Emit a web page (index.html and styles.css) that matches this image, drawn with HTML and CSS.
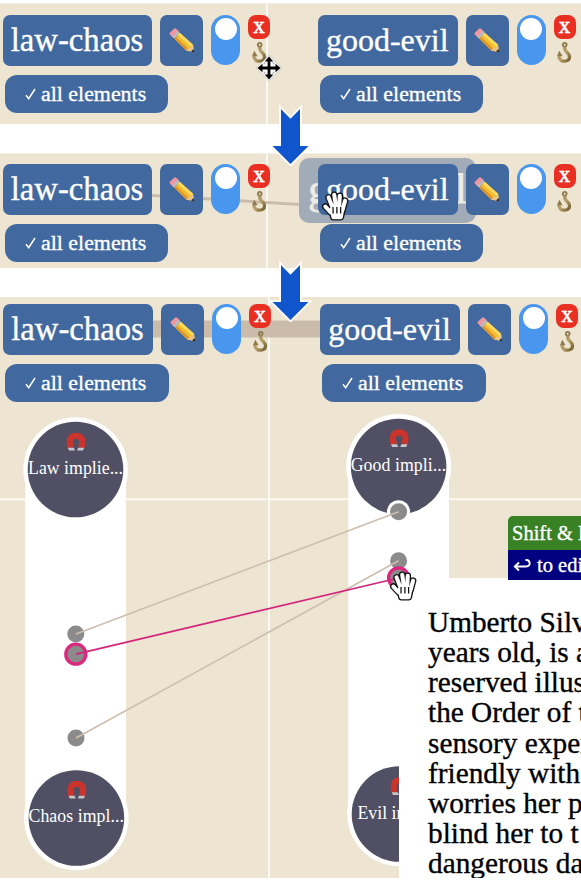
FILE: index.html
```html
<!DOCTYPE html>
<html lang="en">
<head>
<meta charset="utf-8">
<title>Linking axes</title>
<link rel="stylesheet" href="styles.css">
</head>
<body>
<svg class="defs" aria-hidden="true">
  <defs>
    <linearGradient id="brass" x1="0" y1="0" x2="1" y2="1">
      <stop offset="0" stop-color="#8d7a4e"/><stop offset=".5" stop-color="#b8a26b"/><stop offset="1" stop-color="#6f5b2c"/>
    </linearGradient>
    <symbol id="pencil" viewBox="0 0 26 25">
      <path d="M1.5 5.5 6 1.2 8.6 3.3 4 8.5Z" fill="#ef97a0" stroke="#ef97a0" stroke-width="2" stroke-linejoin="round"/>
      <path d="M3.3 8.7 8.7 2.8 10.7 4.7 5.4 10.8Z" fill="#b7bcc4"/>
      <path d="M5.4 10.8 10.7 4.7 24 16.8 25 24 17.2 22.6Z" fill="#f3bd32"/>
      <path d="M8.8 6.9 10.7 4.7 24 16.8 22.4 19Z" fill="#ffda5c"/>
      <path d="M5.4 10.8 7 9 19.2 20.5 17.2 22.6Z" fill="#dd952b"/>
      <path d="M17.2 22.6 19.4 20 22 19.4 24 16.8 25.2 24.2Z" fill="#e8c48d"/>
      <path d="M22 23.6 24.5 21 25.4 24.5Z" fill="#292929"/>
    </symbol>
    <symbol id="hook" viewBox="0 0 15 21">
      <circle cx="7.7" cy="2.8" r="1.9" fill="none" stroke="#8d794b" stroke-width="1.8"/>
      <path d="M7.8 4.5 8 7.5C8.3 10 12.8 11 12.5 15 12.2 18.2 10 19.2 7.2 19.2 3.8 19.2 1.8 17 2 13" fill="none" stroke="url(#brass)" stroke-width="3.3"/>
      <path d="M.2 13.8 2.3 8.8 5.6 14.2Z" fill="#8d794b"/>
    </symbol>
    <symbol id="check" viewBox="0 0 11 12">
      <path d="M1 7.2 3.7 10.7 10 1" fill="none" stroke="#fff" stroke-width="1.5"/>
    </symbol>
    <symbol id="magnet" viewBox="0 0 19 19">
      <path d="M4.6 15.5C1 8 4.2 3.4 9.5 3.4S18 8 14.4 15.5" fill="none" stroke="#c9342d" stroke-width="6.4"/>
      <path d="M1.3 15.2H7.4L8.4 18H2.5ZM11.6 15.2H17.7L16.5 18H10.6Z" fill="#c5c6ca"/>
    </symbol>
    <symbol id="arrow" viewBox="0 0 42 62">
      <path d="M11 5 20.5 14.8 30 5V42H38.5L20.5 60 2.5 42H11Z" fill="#fff" stroke="#fff" stroke-width="3.6"/>
      <path d="M11 5 20.5 14.8 30 5V42H38.5L20.5 60 2.5 42H11Z" fill="#1155cc"/>
    </symbol>
    <symbol id="hand" viewBox="0 0 27 30">
      <g fill="none" stroke="#111" stroke-width="6.2" stroke-linecap="round" stroke-linejoin="round">
        <path d="M4 15.5 9 21M7 7 11 17M12.3 4.5 14 16M17.5 5.5 17 16M22.5 10 20 19"/>
        <path d="M10 19 20 18 18.5 25.5H11.5Z"/>
      </g>
      <g fill="#fff" stroke="#fff" stroke-width="3.8" stroke-linecap="round" stroke-linejoin="round">
        <path d="M4 15.5 9 21M7 7 11 17M12.3 4.5 14 16M17.5 5.5 17 16M22.5 10 20 19"/>
        <path d="M10 18 20 17 18.5 25.5H11.5Z"/>
      </g>
      <path d="M11.2 16V22M14.8 16V22M18.3 16V22" stroke="#111" stroke-width="1.2"/>
    </symbol>
  </defs>
</svg>

<main class="page">
  <section class="band first">
    <div class="axes">
      <div class="axis">
        <div class="row">
          <div class="title law">law-chaos</div>
          <div class="edit"><svg><use href="#pencil"/></svg></div>
          <div class="toggle"></div>
          <div class="tools"><div class="close">x</div><svg><use href="#hook"/></svg></div>
        </div>
        <div class="filter"><svg><use href="#check"/></svg><span>all elements</span></div>
      </div>
      <div class="axis">
        <div class="row">
          <div class="title good">good-evil</div>
          <div class="edit"><svg><use href="#pencil"/></svg></div>
          <div class="toggle"></div>
          <div class="tools"><div class="close">x</div><svg><use href="#hook"/></svg></div>
        </div>
        <div class="filter"><svg><use href="#check"/></svg><span>all elements</span></div>
      </div>
    </div>
  </section>

  <section class="band second">
    <svg class="link" viewBox="0 0 581 115"><path d="M152 41.5 326 52" stroke="#cbbbab" stroke-width="3"/></svg>
    <div class="ghost">good-evil</div>
    <div class="axes">
      <div class="axis">
        <div class="row">
          <div class="title law">law-chaos</div>
          <div class="edit"><svg><use href="#pencil"/></svg></div>
          <div class="toggle"></div>
          <div class="tools"><div class="close">x</div><svg><use href="#hook"/></svg></div>
        </div>
        <div class="filter"><svg><use href="#check"/></svg><span>all elements</span></div>
      </div>
      <div class="axis">
        <div class="row">
          <div class="title good">good-evil</div>
          <div class="edit"><svg><use href="#pencil"/></svg></div>
          <div class="toggle"></div>
          <div class="tools"><div class="close">x</div><svg><use href="#hook"/></svg></div>
        </div>
        <div class="filter"><svg><use href="#check"/></svg><span>all elements</span></div>
      </div>
    </div>
  </section>

  <section class="band third">
    <!-- Coordinates start at the band's top-left corner -->
    <svg class="diagram" viewBox="0 0 581 581">
      <path d="M0 202.3H581" stroke="#faf8f2" stroke-width="2"/>
      <path d="M150 32H325" stroke="#cbbbab" stroke-width="17"/>
      <g fill="#fff">
        <rect x="25.3" y="172" width="100.7" height="350"/>
        <rect x="348.3" y="169" width="100.7" height="350"/>
        <circle cx="75.6" cy="172.5" r="52.3"/><circle cx="76.3" cy="521" r="52.3"/>
        <circle cx="398.7" cy="169.5" r="52.5"/><circle cx="399.5" cy="517" r="52.3"/>
      </g>
      <g fill="#504f64">
        <circle cx="75.5" cy="172.5" r="47.8"/><circle cx="76.4" cy="521" r="47.8"/>
        <circle cx="398.6" cy="169.5" r="47.8"/><circle cx="399.5" cy="517" r="47.8"/>
      </g>
      <use href="#magnet" x="66.5" y="135.5" width="19" height="19"/>
      <use href="#magnet" x="67.3" y="483.5" width="19" height="19"/>
      <use href="#magnet" x="389.7" y="132" width="19" height="19"/>
      <use href="#magnet" x="390.5" y="480" width="19" height="19"/>
      <g class="node-label">
        <text x="28" y="176.5" textLength="95">Law implie...</text>
        <text x="28.5" y="525" textLength="95.5">Chaos impl...</text>
        <text x="350.7" y="173.5" textLength="95.5">Good impli...</text>
        <text x="357.5" y="521.5">Evil impli...</text>
      </g>
      <circle cx="398.5" cy="214.8" r="11.6" fill="#fff"/>
      <g fill="#8b8b8b">
        <circle cx="75.8" cy="337" r="8.5"/><circle cx="76" cy="441" r="8.5"/>
        <circle cx="398.6" cy="214.8" r="8.5"/><circle cx="398.6" cy="263.8" r="8.5"/>
        <circle cx="75.8" cy="357.2" r="10" stroke="#dc277f" stroke-width="3.3"/>
        <circle cx="398.6" cy="281" r="10" stroke="#dc277f" stroke-width="3.3"/>
      </g>
      <g fill="none" stroke="#cdbfb0" stroke-width="1.7">
        <path d="M76 337 398.5 214.8M76 441 398.5 263.8"/>
        <path d="M76 357.2 398.5 281" stroke="#d4247a"/>
      </g>
    </svg>
    <div class="axes">
      <div class="axis">
        <div class="row">
          <div class="title law">law-chaos</div>
          <div class="edit"><svg><use href="#pencil"/></svg></div>
          <div class="toggle"></div>
          <div class="tools"><div class="close">x</div><svg><use href="#hook"/></svg></div>
        </div>
        <div class="filter"><svg><use href="#check"/></svg><span>all elements</span></div>
      </div>
      <div class="axis">
        <div class="row">
          <div class="title good">good-evil</div>
          <div class="edit"><svg><use href="#pencil"/></svg></div>
          <div class="toggle"></div>
          <div class="tools"><div class="close">x</div><svg><use href="#hook"/></svg></div>
        </div>
        <div class="filter"><svg><use href="#check"/></svg><span>all elements</span></div>
      </div>
    </div>
    <div class="card">Umberto Silv<br>years old, is a<br>reserved illus<br>the Order of t<br>sensory exper<br>friendly with<br>worries her p<br>blind her to t<br>dangerous da</div>
    <div class="hint">
      <div class="hint-top">Shift &amp; E</div>
      <div class="hint-bottom"><svg viewBox="0 0 18 14"><path d="M2 8.5H13C18.5 8.5 17.5 1.5 12.5 2M6 4.5 1.8 8.5 6 12.5" fill="none" stroke="#fff" stroke-width="1.9"/></svg><span>to edi</span></div>
    </div>
  </section>

  <svg class="arrow a1"><use href="#arrow"/></svg>
  <svg class="arrow a2"><use href="#arrow"/></svg>
  <svg class="move" viewBox="-14 -14 28 28">
    <path d="M0-12.7 12.7 0 0 12.7-12.7 0Z" fill="#fff" stroke="#aaa" stroke-width=".6"/>
    <path d="M-8 0H8M0-8V8" stroke="#000" stroke-width="2.8"/>
    <path d="M0-11.5 4.3-6.5H-4.3ZM0 11.5 4.3 6.5H-4.3ZM-11.5 0-6.5-4.3V4.3ZM11.5 0 6.5-4.3V4.3Z"/>
    <path d="M-5-3.5V-5H-3.5M5-3.5V-5H3.5M-5 3.5V5H-3.5M5 3.5V5H3.5" fill="none" stroke="#888" stroke-width=".8"/>
  </svg>
  <svg class="hand h1"><use href="#hand"/></svg>
  <svg class="hand h2"><use href="#hand"/></svg>
</main>
</body>
</html>
```
FILE: styles.css
```css
* { box-sizing: border-box; }
body {
  margin: 0;
  background: #fff;
  font-family: "Liberation Serif", serif;
  -webkit-text-stroke: 0.35px currentColor;
  overflow: hidden;
}
svg { display: block; }
.defs { position: absolute; width: 0; height: 0; }
.page {
  position: relative;
  width: 581px;
  height: 882px;
  padding-top: 3px;
  overflow: hidden;
}
.band {
  --split: 266px;
  position: relative;
  isolation: isolate;
  overflow: hidden;
  background: linear-gradient(#faf8f2, #faf8f2) var(--split) 0 / 2px 100% no-repeat #ede5d1;
  border-top: 1px solid #f5f0e3;
}
.first { height: 121px; padding-top: 11px; }
.second { height: 115px; margin-top: 29px; padding-top: 10px; }
.third { --split: 268px; height: 581px; margin-top: 29px; padding-top: 6px; border-top: 0; }

.axes { position: relative; display: grid; grid-template-columns: 315px 266px; }
.third .axes { grid-template-columns: 317px 264px; padding-top: 1px; }
.axis { padding-left: 3px; }
.row { display: flex; gap: 8px; }
.title {
  display: flex;
  align-items: center;
  justify-content: center;
  width: 149px;
  height: 51px;
  padding-right: 1px;
  border-radius: 7px;
  background: #41699f;
  color: #fff;
  font-size: 32.7px;
  line-height: 51px;
  white-space: nowrap;
}
.good { width: 139.5px; font-size: 32px; }
.third .law { width: 150px; }
.third .good { width: 140px; }
.edit {
  display: flex;
  align-items: center;
  justify-content: center;
  width: 43px;
  height: 51px;
  border-radius: 7px;
  background: #41699f;
}
.edit svg { width: 26px; height: 25px; }
.toggle {
  width: 29px;
  height: 50px;
  padding: 3px 3.5px;
  border-radius: 15px;
  background: #4896ed;
}
.toggle::before {
  content: "";
  display: block;
  width: 22px;
  height: 22px;
  border-radius: 50%;
  background: #fff;
}
.tools { display: flex; flex-direction: column; align-items: center; gap: 3px; width: 22px; }
.close {
  width: 22px;
  height: 24px;
  border-radius: 8px;
  background: #e92f22;
  color: #fff;
  font-size: 23px;
  line-height: 21px;
  text-align: center;
  text-shadow: 0 0 1px #fff;
}
.tools svg { width: 15px; height: 21px; }
.filter {
  display: flex;
  align-items: center;
  gap: 5px;
  width: 163px;
  height: 38px;
  margin: 9px 0 0 2px;
  padding-left: 20px;
  border-radius: 12px;
  background: #41699f;
  color: #fff;
  font-size: 21.9px;
  white-space: nowrap;
}
.third .filter { width: 164px; }
.filter svg { width: 11px; height: 12px; }

.link, .diagram { position: absolute; left: 0; top: 0; width: 581px; z-index: -1; }
.link { height: 115px; }
.diagram { height: 581px; }
.ghost {
  position: absolute;
  z-index: -1;
  left: 299px;
  top: 4px;
  width: 177px;
  height: 65px;
  border-radius: 10px;
  background: #a2acb8;
  color: #eeebe4;
  font-size: 41.3px;
  line-height: 62px;
  -webkit-text-stroke-width: 0.8px;
  text-align: center;
}
.node-label { fill: #fff; font-size: 17.8px; }

.card {
  position: absolute;
  left: 399px;
  top: 281px;
  width: 182px;
  height: 300px;
  padding: 29px 0 0 29px;
  overflow: hidden;
  background: #fff;
  color: #000;
  font-size: 29.3px;
  line-height: 30.15px;
  white-space: nowrap;
}
.hint {
  position: absolute;
  left: 508px;
  top: 219px;
  width: 73px;
  overflow: hidden;
  border-radius: 5px 0 0 0;
  color: #fff;
  font-size: 20.5px;
  white-space: nowrap;
}
.hint-top { height: 34px; padding-left: 4px; background: #388124; line-height: 34px; }
.hint-bottom {
  display: flex;
  align-items: center;
  gap: 6px;
  height: 30px;
  padding-left: 5px;
  background: #000080;
}
.hint-bottom svg { flex: none; width: 18px; height: 14px; }

.arrow { position: absolute; left: 269.5px; width: 42px; height: 62px; }
.a1 { top: 104px; }
.a2 { top: 259.5px; }
.move { position: absolute; left: 255px; top: 54px; width: 28px; height: 28px; }
.hand { position: absolute; width: 29px; height: 32px; }
.h1 { left: 321px; top: 190px; }
.h2 { left: 389px; top: 570px; }
```
